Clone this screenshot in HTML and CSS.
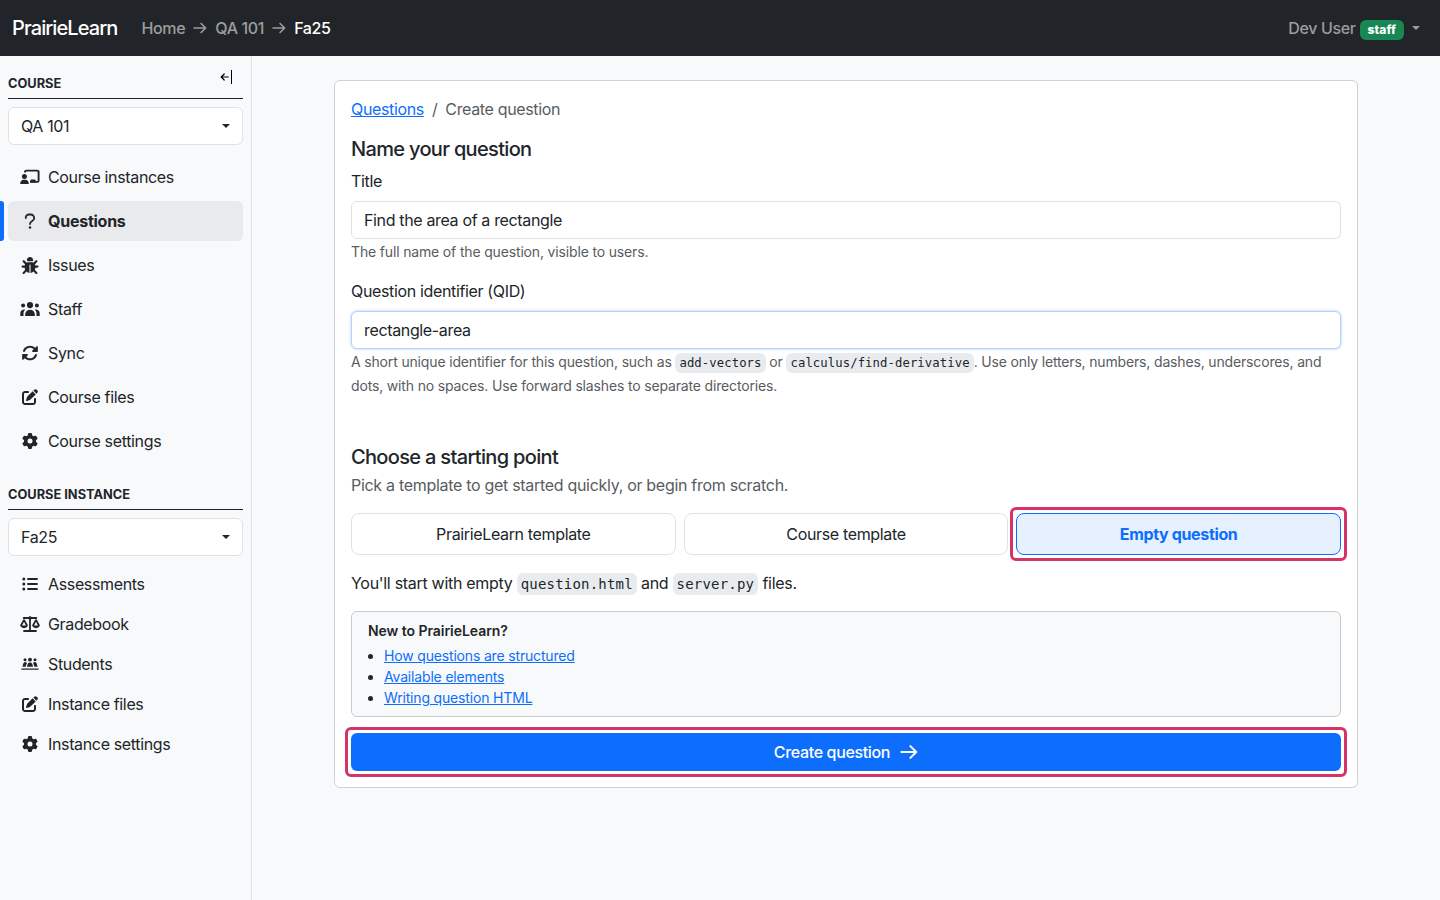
FILE: index.html
```html
<!DOCTYPE html>
<html lang="en">
<head>
<meta charset="utf-8">
<title>Create question | PrairieLearn</title>
<link rel="stylesheet" href="styles.css">
</head>
<body>
<svg class="defs" aria-hidden="true">
  <symbol id="gear" viewBox="0 0 512 512"><path d="M495.9 166.6c3.2 8.7 .5 18.4-6.4 24.6l-43.3 39.4c1.1 8.3 1.7 16.8 1.7 25.4s-.6 17.1-1.7 25.4l43.3 39.4c6.9 6.2 9.6 15.9 6.4 24.6c-4.4 11.9-9.7 23.3-15.8 34.3l-4.7 8.1c-6.6 11-14 21.4-22.1 31.2c-5.9 7.2-15.7 9.6-24.5 6.8l-55.7-17.7c-13.4 10.3-28.2 18.9-44 25.4l-12.5 57.1c-2 9.1-9 16.3-18.2 17.8c-13.8 2.3-28 3.5-42.5 3.5s-28.7-1.2-42.5-3.5c-9.2-1.5-16.2-8.7-18.2-17.8l-12.5-57.1c-15.8-6.5-30.6-15.1-44-25.4L83.1 425.9c-8.8 2.8-18.6 .3-24.5-6.8c-8.1-9.8-15.5-20.2-22.1-31.2l-4.7-8.1c-6.1-11-11.4-22.4-15.8-34.3c-3.2-8.7-.5-18.4 6.4-24.6l43.3-39.4C64.6 273.1 64 264.6 64 256s.6-17.1 1.7-25.4L22.4 191.2c-6.9-6.2-9.6-15.9-6.4-24.6c4.4-11.9 9.7-23.3 15.8-34.3l4.7-8.1c6.6-11 14-21.4 22.1-31.2c5.9-7.2 15.7-9.6 24.5-6.8l55.7 17.7c13.4-10.3 28.2-18.9 44-25.4l12.5-57.1c2-9.1 9-16.3 18.2-17.8C227.3 1.2 241.5 0 256 0s28.7 1.2 42.5 3.5c9.2 1.5 16.2 8.7 18.2 17.8l12.5 57.1c15.8 6.5 30.6 15.1 44 25.4l55.7-17.7c8.8-2.8 18.6-.3 24.5 6.8c8.1 9.8 15.5 20.2 22.1 31.2l4.7 8.1c6.1 11 11.4 22.4 15.8 34.3zM256 336a80 80 0 1 0 0-160 80 80 0 1 0 0 160z"/></symbol>
  <symbol id="edit" viewBox="0 0 512 512"><path d="M471.6 21.7c-21.9-21.9-57.3-21.9-79.2 0L362.3 51.7l97.9 97.9 30.1-30.1c21.9-21.9 21.9-57.3 0-79.2L471.6 21.7zm-299.2 220c-6.1 6.1-10.8 13.6-13.5 21.9l-29.6 88.8c-2.9 8.6-.6 18.1 5.8 24.6s15.9 8.7 24.6 5.8l88.8-29.6c8.2-2.7 15.7-7.4 21.9-13.5L437.7 172.3 339.7 74.3 172.4 241.7zM96 64C43 64 0 107 0 160V416c0 53 43 96 96 96H352c53 0 96-43 96-96V320c0-17.7-14.3-32-32-32s-32 14.3-32 32v96c0 17.7-14.3 32-32 32H96c-17.7 0-32-14.3-32-32V160c0-17.7 14.3-32 32-32h96c17.7 0 32-14.3 32-32s-14.3-32-32-32H96z"/></symbol>
  <symbol id="sync" viewBox="12 16 488 480"><path d="M142.9 142.9c-17.5 17.5-30.1 38-37.8 59.8c-5.9 16.7-24.2 25.4-40.8 19.5s-25.4-24.2-19.5-40.8C55.6 150.7 73.2 122 97.6 97.6c87.2-87.2 228.3-87.5 315.8-1L455 55c6.9-6.9 17.2-8.9 26.2-5.2s14.8 12.5 14.8 22.2l0 128c0 13.3-10.7 24-24 24L344 224c-9.7 0-18.5-5.8-22.2-14.8s-1.7-19.3 5.2-26.2l41.1-41.1c-62.6-61.5-163.1-61.2-225.3 1zM16 312c0-13.3 10.7-24 24-24L168 288c9.7 0 18.5 5.8 22.2 14.8s1.7 19.3-5.2 26.2l-41.1 41.1c62.6 61.5 163.1 61.2 225.3-1c17.5-17.5 30.1-38 37.8-59.8c5.9-16.7 24.2-25.4 40.8-19.5s25.4 24.2 19.5 40.8c-10.8 30.6-28.4 59.3-52.9 83.8c-87.2 87.2-228.3 87.5-315.8 1L57 457c-6.9 6.9-17.2 8.9-26.2 5.2S16 449.7 16 440z"/></symbol>
  <symbol id="bug" viewBox="0 0 512 512"><path d="M256 0c53 0 96 43 96 96v3.6c0 15.7-12.7 28.4-28.4 28.4H188.4c-15.7 0-28.4-12.7-28.4-28.4V96c0-53 43-96 96-96zM41.4 105.4c12.5-12.5 32.8-12.5 45.3 0l64 64c.7 .7 1.3 1.4 1.9 2.1c14.2-7.3 30.4-11.4 47.5-11.4H312c17.1 0 33.2 4.1 47.5 11.4c.6-.7 1.2-1.4 1.9-2.1l64-64c12.5-12.5 32.8-12.5 45.3 0s12.5 32.8 0 45.3l-64 64c-.7 .7-1.4 1.3-2.1 1.9c6.2 12 10.1 25.3 11.1 39.5H480c17.7 0 32 14.3 32 32s-14.3 32-32 32H416c0 24.6-5.5 47.8-15.4 68.6c2.2 1.3 4.2 2.9 6 4.8l64 64c12.5 12.5 12.5 32.8 0 45.3s-32.8 12.5-45.3 0l-63.1-63.1c-24.5 21.8-55.8 36.2-90.3 39.6V240c0-8.8-7.2-16-16-16s-16 7.2-16 16V479.2c-34.5-3.4-65.8-17.8-90.3-39.6L86.6 502.6c-12.5 12.5-32.8 12.5-45.3 0s-12.5-32.8 0-45.3l64-64c1.9-1.9 3.9-3.4 6-4.8C101.5 367.8 96 344.6 96 320H32c-17.7 0-32-14.3-32-32s14.3-32 32-32H96.3c1.1-14.1 5-27.5 11.1-39.5c-.7-.6-1.4-1.2-2.1-1.9l-64-64c-12.5-12.5-12.5-32.8 0-45.3z"/></symbol>
  <symbol id="team" viewBox="0 0 20 16"><circle cx="10" cy="4.1" r="3.1"/><circle cx="3.1" cy="4.5" r="2"/><circle cx="16.9" cy="4.5" r="2"/><path d="M5.2 15.1v-1.8a4.8 4.5 0 0 1 9.6 0v1.8zM.3 15.1v-2.8a3.8 3.8 0 0 1 4.9-3.7A6.3 6.3 0 0 0 3.5 13v2.1zM19.7 15.1v-2.8a3.8 3.8 0 0 0-4.9-3.7 6.3 6.3 0 0 1 1.7 4.4v2.1z"/></symbol>
  <symbol id="board" viewBox="0 0 20 16"><circle cx="4.4" cy="7.4" r="2.5"/><path d="M.2 15a3.6 3.8 0 0 1 3.4-4.2h1.8A3.6 3.8 0 0 1 8.8 15z"/><path d="M5 3.6V3a1.4 1.4 0 0 1 1.4-1.4h10.8A1.4 1.4 0 0 1 18.6 3v8.5a1.4 1.4 0 0 1-1.4 1.4H10" fill="none" stroke="currentColor" stroke-width="1.9"/><path d="M10.2 13.5v-1.6q0-1.4 1.4-1.4h2.8q1.4 0 1.4 1.4v1.6z"/></symbol>
  <symbol id="question" viewBox="0 0 16 16"><path d="M3.8 5.1V4.6A3.1 3.1 0 0 1 6.9 1.5h1.7A3.6 3.6 0 0 1 12.2 5c0 1.5-.8 2.3-2 3C8.8 8.8 8 9.3 8 11.1" fill="none" stroke="currentColor" stroke-width="1.8" stroke-linecap="round"/><circle cx="8" cy="14.6" r="1.25"/></symbol>
  <symbol id="list" viewBox="0 0 16 16"><circle cx="1.8" cy="3" r="1.5"/><circle cx="1.8" cy="8" r="1.5"/><circle cx="1.8" cy="13" r="1.5"/><path d="M6 3h9M6 8h9M6 13h9" fill="none" stroke="currentColor" stroke-width="1.9" stroke-linecap="round"/></symbol>
  <symbol id="scale" viewBox="0 0 20 16"><path d="M3.7 2h12.6M10 1.5V15M4 15h12" fill="none" stroke="currentColor" stroke-width="1.8" stroke-linecap="round"/><circle cx="10" cy="2" r="1.8"/><path fill-rule="evenodd" d="M4 3.2c.4 0 .7.2.9.5l2.7 5c.3.7.3 1 .1 1.4a4 3.3 0 0 1-7.4 0c-.2-.4-.2-.7.1-1.4l2.7-5c.2-.3.5-.5.9-.5zM4 5.7L2.1 9.4h3.8zM16 3.2c.4 0 .7.2.9.5l2.7 5c.3.7.3 1 .1 1.4a4 3.3 0 0 1-7.4 0c-.2-.4-.2-.7.1-1.4l2.7-5c.2-.3.5-.5.9-.5zM16 5.7l-1.9 3.7h3.8z"/></symbol>
  <symbol id="people" viewBox="0 0 20 16"><circle cx="10" cy="3.7" r="1.9"/><circle cx="5" cy="3.7" r="1.5"/><circle cx="15" cy="3.7" r="1.5"/><path d="M6.9 10.8l.9-3q.5-1.4 2.2-1.4t2.2 1.4l.9 3zM2.4 10.8L3.3 7.6q.4-1.5 1.8-1.5 1.2 0 1.8.9L5.6 10.8zM17.6 10.8l-.9-3.2q-.4-1.5-1.8-1.5-1.2 0-1.8.9l1.3 3.8z"/><path d="M1.8 13.1h16.4" stroke="currentColor" stroke-width="1.3" stroke-linecap="round"/></symbol>
  <symbol id="arrow" viewBox="0 0 16 16"><path d="M1.2 8h13M9.2 2.8L14.5 8l-5.3 5.2" fill="none" stroke="currentColor" stroke-width="1.8" stroke-linecap="round" stroke-linejoin="round"/></symbol>
</svg>

<header class="navbar">
  <a class="brand">PrairieLearn</a>
  <nav class="trail">
    <a>Home</a><svg class="trail-arrow"><use href="#arrow"/></svg><a>QA 101</a><svg class="trail-arrow"><use href="#arrow"/></svg><a class="current">Fa25</a>
  </nav>
  <div class="user"><span>Dev User</span><span class="badge">staff</span><i class="caret"></i></div>
</header>

<div class="layout">
  <aside class="sidebar">
    <div class="side-head first">Course
      <svg class="collapse" viewBox="0 0 14 14"><path d="M1.3 7h7M4.2 4L1.2 7l3 3" fill="none" stroke="currentColor" stroke-width="1.2" stroke-linecap="round" stroke-linejoin="round"/><path d="M11.5 0v14" stroke="currentColor"/></svg>
    </div>
    <div class="select">QA 101<i class="caret"></i></div>
    <nav class="side-nav spaced">
      <a><svg class="icon wide"><use href="#board"/></svg>Course instances</a>
      <a class="active"><svg class="icon"><use href="#question"/></svg>Questions</a>
      <a><svg class="icon bug"><use href="#bug"/></svg>Issues</a>
      <a><svg class="icon wide"><use href="#team"/></svg>Staff</a>
      <a><svg class="icon"><use href="#sync"/></svg>Sync</a>
      <a><svg class="icon"><use href="#edit"/></svg>Course files</a>
      <a><svg class="icon"><use href="#gear"/></svg>Course settings</a>
    </nav>
    <div class="side-head second">Course instance</div>
    <div class="select">Fa25<i class="caret"></i></div>
    <nav class="side-nav">
      <a><svg class="icon"><use href="#list"/></svg>Assessments</a>
      <a><svg class="icon wide"><use href="#scale"/></svg>Gradebook</a>
      <a><svg class="icon wide"><use href="#people"/></svg>Students</a>
      <a><svg class="icon"><use href="#edit"/></svg>Instance files</a>
      <a><svg class="icon"><use href="#gear"/></svg>Instance settings</a>
    </nav>
  </aside>

  <main class="content">
    <section class="card">
      <div class="breadcrumb"><a class="link">Questions</a><span>/</span><span>Create question</span></div>
      <h2 class="heading name-heading">Name your question</h2>
      <label class="label" for="title">Title</label>
      <input class="field" id="title" value="Find the area of a rectangle">
      <div class="help"><small>The full name of the question, visible to users.</small></div>
      <label class="label" for="qid">Question identifier (QID)</label>
      <input class="field focused" id="qid" value="rectangle-area">
      <div class="help help-qid"><small>A short unique identifier for this question, such as <code>add-vectors</code> or <code>calculus/find-derivative</code>. Use only letters, numbers, dashes, underscores, and<br>dots, with no spaces. Use forward slashes to separate directories.</small></div>
      <h2 class="heading start-heading">Choose a starting point</h2>
      <p class="subtitle">Pick a template to get started quickly, or begin from scratch.</p>
      <div class="choices">
        <div class="choice">PrairieLearn template</div>
        <div class="choice">Course template</div>
        <div class="choice selected marked">Empty question</div>
      </div>
      <p class="note">You'll start with empty <code>question.html</code> and <code>server.py</code> files.</p>
      <div class="tips">
        <div class="tips-title">New to PrairieLearn?</div>
        <ul class="tips-list">
          <li><a class="link">How questions are structured</a></li>
          <li><a class="link">Available elements</a></li>
          <li><a class="link">Writing question HTML</a></li>
        </ul>
      </div>
      <div class="submit marked">Create question<svg class="submit-arrow"><use href="#arrow"/></svg></div>
    </section>
  </main>
</div>
</body>
</html>
```
FILE: styles.css
```css
* { box-sizing: border-box; }
body {
  margin: 0;
  font: 400 16px/24px Inter, "Liberation Sans", sans-serif;
  letter-spacing: -0.35px;
  color: #212529;
  background: #f8f9fa;
}
.defs { display: none; }
svg { fill: currentColor; flex: none; }
h2, p { margin: 0; }

.navbar {
  display: flex;
  align-items: center;
  height: 56px;
  padding: 0 20px 0 12px;
  background: #212529;
  color: #9b9d9e;
  font-weight: 450;
}
.brand { font-size: 20px; color: #fff; margin-right: 24px; letter-spacing: -0.9px; }
.trail { display: flex; align-items: center; }
.trail-arrow { width: 14px; height: 14px; margin: 0 8px; }
.current { color: #fff; font-weight: 500; }
.user { display: flex; align-items: center; margin-left: auto; }
.badge {
  margin: 3px 8px 0 4px;
  padding: 0 8px;
  border-radius: 6px;
  background: #198754;
  color: #fff;
  font-size: 12px;
  font-weight: 800;
  line-height: 20px;
  letter-spacing: 0.1px;
}
.caret {
  border: 4.8px solid transparent;
  border-top-color: currentColor;
  border-bottom: 0;
}

.layout { display: flex; height: 844px; }
.sidebar {
  width: 252px;
  padding: 0 8px;
  border-right: 1px solid #dee2e6;
}
.side-head {
  display: flex;
  justify-content: space-between;
  border-bottom: 1px solid #212529;
  font-size: 12.8px;
  font-weight: 700;
  line-height: 20px;
  letter-spacing: 0;
  text-transform: uppercase;
}
.first { height: 43px; padding-top: 18px; }
.second { height: 25px; margin-top: 24px; }
.collapse { width: 14px; height: 14px; margin: -4px 9px 0 0; color: #000; }
.select {
  display: flex;
  align-items: center;
  justify-content: space-between;
  height: 38px;
  margin: 8px 0;
  padding: 0 12px;
  border: 1px solid #dee2e6;
  border-radius: 6px;
  background: #fff;
}
.side-nav { display: flex; flex-direction: column; }
.spaced { gap: 4px; margin-top: 12px; }
.side-nav a {
  display: flex;
  align-items: center;
  height: 40px;
  padding-left: 14px;
  border-radius: 6px;
}
.side-nav .active {
  position: relative;
  background: #e9eaeb;
  font-weight: 700;
  letter-spacing: -0.25px;
}
.active::before {
  content: "";
  position: absolute;
  left: -8px;
  width: 4px;
  height: 40px;
  border-radius: 0 3px 3px 0;
  background: #0d6efd;
}
.icon { width: 16px; height: 16px; margin-right: 10px; }
.wide { width: 20px; margin: 0 8px 0 -2px; }
.bug { width: 18px; height: 17px; margin: 0 9px 0 -1px; }

.content { flex: 1; padding: 24px 82px; }
.card {
  height: 708px;
  padding: 16px;
  border: 1px solid #cfd1d3;
  border-radius: 6px;
  background: #fff;
}
.breadcrumb { display: flex; gap: 8px; margin-bottom: 16px; color: #595c5f; }
.link { color: #0d6efd; text-decoration: underline; }
.heading { font-size: 20px; font-weight: 500; line-height: 24px; letter-spacing: -0.67px; }
.name-heading { margin-bottom: 8px; }
.start-heading { margin-bottom: 4px; }
.label { display: block; margin-bottom: 8px; }
.field {
  display: block;
  width: 100%;
  height: 38px;
  padding: 0 12px;
  border: 1px solid #dee2e6;
  border-radius: 6px;
  outline: 0;
  font: inherit;
  letter-spacing: inherit;
  color: inherit;
  background: #fff;
}
.focused { border-color: #b4d1fd; box-shadow: 0 0 0 1.5px #e4effe; }
.help { margin-bottom: 16px; color: #595c5f; white-space: nowrap; }
.help small { font-size: 14px; line-height: 1; letter-spacing: -0.16px; }
.help-qid { margin-bottom: 48px; }
code {
  padding: 3px 4px;
  border-radius: 6px;
  background: #e9ecef;
  color: #212529;
  font-family: "DejaVu Sans Mono", monospace;
  font-size: 0.875em;
  line-height: 1;
  letter-spacing: 0.2px;
}
.help code { letter-spacing: 0.09px; }
.subtitle { color: #595c5f; margin-bottom: 16px; letter-spacing: -0.3px; }
.choices { display: grid; grid-template-columns: repeat(3, 1fr); gap: 8px; margin-bottom: 16px; }
.choice {
  height: 42px;
  border: 1px solid #dee2e6;
  border-radius: 8px;
  line-height: 40px;
  text-align: center;
}
.selected { border-color: #0d6efd; background: #e7f0ff; color: #0d6efd; font-weight: 700; }
.marked { position: relative; }
.marked::after {
  content: "";
  position: absolute;
  inset: -6px;
  border: 3px solid #d63369;
  border-radius: 6px;
}
.selected.marked::after { inset: -7px; }
.note { margin-bottom: 16px; letter-spacing: -0.3px; }
.tips {
  height: 106px;
  margin-bottom: 16px;
  padding: 8px 16px;
  border: 1px solid #c8cbce;
  border-radius: 6px;
  background: #f8f9fa;
  font-size: 14px;
  line-height: 21px;
  letter-spacing: -0.17px;
}
.tips-title { font-weight: 600; margin-bottom: 4px; letter-spacing: -0.05px; }
.tips-list { margin: 0; padding-left: 16px; }
.submit {
  display: flex;
  align-items: center;
  justify-content: center;
  height: 38px;
  border-radius: 6px;
  background: #0d6efd;
  color: #fff;
  font-weight: 450;
}
.submit-arrow { width: 18px; height: 18px; margin-left: 10px; }
```
